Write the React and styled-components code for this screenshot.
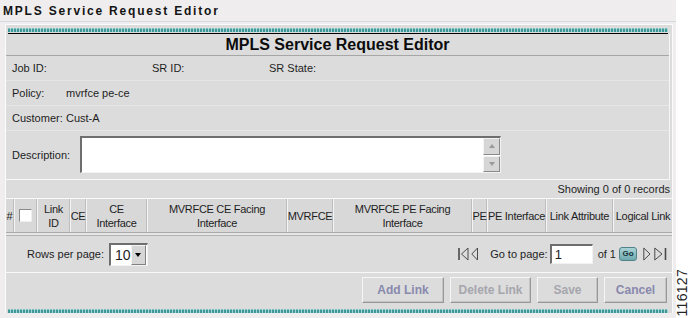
import React from "react";
import styled, { createGlobalStyle } from "styled-components";

const GlobalStyle = createGlobalStyle`
  body {
    margin: 0;
    background: #ffffff;
    font-family: "Liberation Sans", Arial, sans-serif;
    font-size: 11px;
    color: #1e1e1e;
  }
`;

const Page = styled.div`
  display: flex;
  width: 689px;
  height: 318px;
  overflow: hidden;
`;

const Main = styled.div`
  width: 676px;
  background: #efedee;
`;

const Side = styled.div`
  width: 13px;
  display: flex;
  align-items: flex-end;
  justify-content: center;
  background: #ffffff;
`;

const FigureNumber = styled.span`
  writing-mode: vertical-rl;
  transform: rotate(180deg);
  font-size: 14px;
  line-height: 13px;
  letter-spacing: 0.3px;
  padding-top: 2px;
  color: #262626;
`;

const PageTitle = styled.h1`
  margin: 0;
  height: 18px;
  padding: 3px 0 0 3px;
  font-size: 12px;
  line-height: 16px;
  font-weight: bold;
  letter-spacing: 1.8px;
  color: #141414;
  border-bottom: 1px solid #d5dae0;
`;

const Panel = styled.div`
  margin: 2px 0 0 5px;
  width: 666px;
  border: 1px solid #fbfbfb;
  border-bottom: none;
  background: #dcdcdc;
  padding-top: 3px;
`;

const Stripe = styled.div`
  height: 4px;
  margin: 0 4px 0 2px;
  background:
    linear-gradient(180deg, rgba(255, 255, 255, 0.35) 0 1px, transparent 1px),
    repeating-linear-gradient(90deg, #3e989a 0 2px, #a3d4d4 2px 3px);
`;

const Rule = styled.div`
  height: 1px;
  margin: 1px 4px 0 2px;
  background: #000;
`;

const FormBox = styled.div`
  margin-right: 2px;
  border-right: 1px solid #f6f6f6;
`;

const Heading = styled.h2`
  margin: 0;
  height: 21px;
  line-height: 21px;
  text-align: center;
  font-size: 16px;
  font-weight: bold;
  color: #0c0c0c;
  border-bottom: 1px solid #a6a6a6;
`;

const InfoRow = styled.div`
  display: flex;
  align-items: center;
  height: 24px;
  padding-left: 6px;
  border-bottom: 1px solid #e6e6e6;
`;

const Field = styled.span`
  width: ${(p) => (p.$w ? `${p.$w}px` : "auto")};
  flex: none;
`;

const DescRow = styled.div`
  display: flex;
  align-items: center;
  height: 37px;
  padding: 5px 0 6px 6px;
  border-bottom: 1px solid #f8f8f8;
`;

const DescBox = styled.div`
  display: flex;
  width: 421px;
  height: 37px;
  box-sizing: border-box;
  background: #ffffff;
  border-style: solid;
  border-width: 2px 1px 1px 2px;
  border-color: #6e6e6e #f2f2f2 #f2f2f2 #6e6e6e;
`;

const DescText = styled.div`
  flex: 1;
`;

const ScrollBar = styled.div`
  width: 17px;
  display: flex;
  flex-direction: column;
  gap: 1px;
  background: #ffffff;
`;

const ScrollButton = styled.div`
  flex: 1;
  display: flex;
  align-items: center;
  justify-content: center;
  background: #d6d6d6;
  border-style: solid;
  border-width: 1px;
  border-color: #f4f4f4 #8a8a8a #8a8a8a #f4f4f4;

  &::after {
    content: "";
    border-left: 3.5px solid transparent;
    border-right: 3.5px solid transparent;
    ${(p) =>
      p.$down
        ? "border-top: 4px solid #9a9a9a;"
        : "border-bottom: 4px solid #9a9a9a;"}
  }
`;

const RecordCount = styled.div`
  height: 18px;
  line-height: 19px;
  text-align: right;
  padding-right: 2px;
  border-bottom: 1px solid #fafafa;
`;

const TableHead = styled.div`
  display: grid;
  grid-template-columns: 8px 23px 33px 16px 61px 140px 46px 139px 15px 59px 67px 59px;
  height: 33px;
  background: #d8d8d8;
  border-bottom: 1px solid #a9a9a9;
`;

const HeadCell = styled.div`
  display: flex;
  align-items: center;
  justify-content: center;
  text-align: center;
  line-height: 14px;
  white-space: nowrap;
  letter-spacing: -0.3px;
  border-left: 1px solid #f4f4f4;
  border-right: 1px solid #bdbdbd;
  &:first-child {
    border-left: none;
  }
  &:last-child {
    border-right: none;
  }
`;

const CheckBox = styled.span`
  width: 13px;
  height: 13px;
  box-sizing: border-box;
  background: #ffffff;
  border-style: solid;
  border-width: 1px;
  border-color: #8a8a8a #eeeeee #eeeeee #8a8a8a;
`;

const HeadGap = styled.div`
  height: 2px;
  background: #e6e6e6;
  border-bottom: 1px solid #b3b3b3;
`;

const PagerRow = styled.div`
  display: flex;
  align-items: center;
  justify-content: space-between;
  height: 36px;
  padding: 0 5px 0 21px;
  border-bottom: 1px solid #f8f8f8;
`;

const Group = styled.div`
  display: flex;
  align-items: center;
`;

const Select = styled.div`
  display: flex;
  align-items: center;
  width: 39px;
  height: 23px;
  box-sizing: border-box;
  margin-left: 5px;
  background: #ffffff;
  border-style: solid;
  border-width: 2px 1px 1px 2px;
  border-color: #6e6e6e #f2f2f2 #f2f2f2 #6e6e6e;
`;

const SelectValue = styled.span`
  flex: 1;
  padding-left: 4px;
  font-size: 14px;
`;

const SelectArrow = styled.span`
  width: 14px;
  height: 18px;
  margin-right: 1px;
  display: flex;
  align-items: center;
  justify-content: center;
  background: #d6d6d6;
  border-style: solid;
  border-width: 1px;
  border-color: #f4f4f4 #808080 #808080 #f4f4f4;

  &::after {
    content: "";
    border-left: 3.5px solid transparent;
    border-right: 3.5px solid transparent;
    border-top: 4px solid #000;
  }
`;

const NavIcon = styled.svg`
  display: block;
  margin-left: ${(p) => p.$gap || 0}px;
`;

const PagerText = styled.span`
  margin-left: ${(p) => p.$gap || 0}px;
`;

const PageInput = styled.div`
  width: 43px;
  height: 20px;
  box-sizing: border-box;
  margin-left: 2px;
  padding-left: 3px;
  line-height: 17px;
  font-size: 13px;
  background: #ffffff;
  border-style: solid;
  border-width: 2px 1px 1px 2px;
  border-color: #6e6e6e #f2f2f2 #f2f2f2 #6e6e6e;
`;

const GoButton = styled.span`
  margin-left: 3px;
  width: 18px;
  height: 14px;
  box-sizing: border-box;
  border: 1px solid #4f8389;
  border-radius: 3px;
  background: linear-gradient(180deg, #a9d3d6, #6ea8ae);
  color: #16333a;
  font-size: 8px;
  font-weight: bold;
  line-height: 12px;
  text-align: center;
`;

const ButtonRow = styled.div`
  display: flex;
  justify-content: flex-end;
  align-items: flex-start;
  gap: 6px;
  height: 36px;
  box-sizing: border-box;
  padding: 4px 5px 0 0;
`;

const ActionButton = styled.button`
  width: ${(p) => p.$w}px;
  height: 26px;
  padding: 0;
  background: #dcdcdc;
  border-style: solid;
  border-width: 1px;
  border-color: #f6f6f6 #989898 #989898 #f6f6f6;
  box-shadow: inset -1px -1px 0 #c4c4c4;
  font-family: "Liberation Sans", Arial, sans-serif;
  font-size: 12px;
  font-weight: bold;
  color: ${(p) => (p.$muted ? "#a6a6ae" : "#8989ad")};
`;

const FirstIcon = () => (
  <NavIcon width="11" height="14" viewBox="0 0 11 14">
    <line x1="1" y1="1" x2="1" y2="13" stroke="#4a4a4a" strokeWidth="1.6" />
    <polygon points="10,1 3.5,7 10,13" fill="none" stroke="#4a4a4a" strokeWidth="1" />
  </NavIcon>
);

const PrevIcon = () => (
  <NavIcon $gap={2} width="7" height="14" viewBox="0 0 7 14">
    <polygon points="6.5,1 0.8,7 6.5,13" fill="none" stroke="#4a4a4a" strokeWidth="1" />
  </NavIcon>
);

const NextIcon = () => (
  <NavIcon $gap={6} width="8" height="14" viewBox="0 0 8 14">
    <polygon points="0.8,1 7,7 0.8,13" fill="none" stroke="#4a4a4a" strokeWidth="1" />
  </NavIcon>
);

const LastIcon = () => (
  <NavIcon $gap={3} width="13" height="14" viewBox="0 0 13 14">
    <polygon points="0.8,1 8,7 0.8,13" fill="none" stroke="#4a4a4a" strokeWidth="1" />
    <line x1="11.5" y1="1" x2="11.5" y2="13" stroke="#4a4a4a" strokeWidth="1.6" />
  </NavIcon>
);

const columns = [
  "#",
  null,
  <>Link<br />ID</>,
  "CE",
  <>CE<br />Interface</>,
  <>MVRFCE CE Facing<br />Interface</>,
  "MVRFCE",
  <>MVRFCE PE Facing<br />Interface</>,
  "PE",
  "PE Interface",
  "Link Attribute",
  "Logical Link",
];

const buttons = [
  { label: "Add Link", w: 82 },
  { label: "Delete Link", w: 81, muted: true },
  { label: "Save", w: 61, muted: true },
  { label: "Cancel", w: 63 },
];

export default function App() {
  return (
    <Page>
      <GlobalStyle />
      <Main>
        <PageTitle>MPLS Service Request Editor</PageTitle>
        <Panel>
          <Stripe />
          <Rule />
          <FormBox>
            <Heading>MPLS Service Request Editor</Heading>
            <InfoRow>
              <Field $w={140}>Job ID:</Field>
              <Field $w={117}>SR ID:</Field>
              <Field>SR State:</Field>
            </InfoRow>
            <InfoRow>
              <Field $w={54}>Policy:</Field>
              <Field>mvrfce pe-ce</Field>
            </InfoRow>
            <InfoRow>
              <Field $w={54}>Customer:</Field>
              <Field>Cust-A</Field>
            </InfoRow>
            <DescRow>
              <Field $w={68}>Description:</Field>
              <DescBox>
                <DescText />
                <ScrollBar>
                  <ScrollButton />
                  <ScrollButton $down />
                </ScrollBar>
              </DescBox>
            </DescRow>
          </FormBox>
          <RecordCount>Showing 0 of 0 records</RecordCount>
          <TableHead>
            {columns.map((c, i) => (
              <HeadCell key={i}>{c === null ? <CheckBox /> : c}</HeadCell>
            ))}
          </TableHead>
          <HeadGap />
          <PagerRow>
            <Group>
              <span>Rows per page:</span>
              <Select>
                <SelectValue>10</SelectValue>
                <SelectArrow />
              </Select>
            </Group>
            <Group>
              <FirstIcon />
              <PrevIcon />
              <PagerText $gap={12}>Go to page:</PagerText>
              <PageInput>1</PageInput>
              <PagerText $gap={5}>of 1</PagerText>
              <GoButton>Go</GoButton>
              <NextIcon />
              <LastIcon />
            </Group>
          </PagerRow>
          <ButtonRow>
            {buttons.map((b) => (
              <ActionButton key={b.label} $w={b.w} $muted={b.muted}>
                {b.label}
              </ActionButton>
            ))}
          </ButtonRow>
          <Stripe />
        </Panel>
      </Main>
      <Side>
        <FigureNumber>116127</FigureNumber>
      </Side>
    </Page>
  );
}
